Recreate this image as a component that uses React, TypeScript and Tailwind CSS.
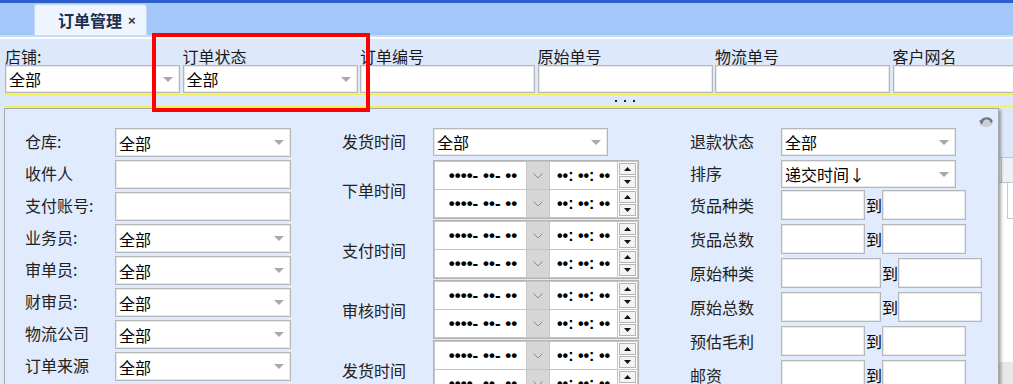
import React from "react";

function Caret() {
  return (
    <svg width="10" height="5" viewBox="0 0 10 5" className="shrink-0">
      <path d="M0 0H10L5 5Z" fill="#a9a9a9" />
    </svg>
  );
}

function Select({ value, className }: { value?: string; className: string }) {
  return (
    <div
      className={`flex items-center justify-between bg-white border border-[#b7b7b7] shadow-[inset_0_0_0_1px_#e9e9e9] pl-[3px] pr-[6px] ${className}`}
    >
      <span className="text-[16px] leading-none text-black">{value}</span>
      <Caret />
    </div>
  );
}

function Box({ className }: { className: string }) {
  return (
    <div
      className={`bg-white border border-[#b7b7b7] shadow-[inset_0_0_0_1px_#e9e9e9] ${className}`}
    />
  );
}

function DateRow() {
  return (
    <div className="flex h-[27px] gap-[1px]">
      <div className="w-[91px] bg-white flex items-center justify-center pl-[5px] text-[17px] font-bold font-['Liberation_Sans',sans-serif] leading-none text-black whitespace-nowrap">
        ••••- ••- ••
      </div>
      <div className="w-[22px] bg-[#d6d6d6] flex items-center justify-center">
        <svg width="10" height="6" viewBox="0 0 10 6">
          <path d="M0.5 0.5L5 5L9.5 0.5" fill="none" stroke="#8a8a8a" strokeWidth="1" />
        </svg>
      </div>
      <div className="w-[67px] bg-white flex items-center justify-center text-[16px] font-bold font-['Liberation_Sans',sans-serif] leading-none text-black whitespace-nowrap">
        ••: ••: ••
      </div>
      <div className="w-[19px] bg-white flex flex-col gap-[1px] p-[1px]">
        <div className="flex-1 bg-[#f3f3f3] border border-[#b4b4b4] flex items-center justify-center">
          <svg width="7" height="4" viewBox="0 0 7 4">
            <path d="M0 4H7L3.5 0Z" fill="#111" />
          </svg>
        </div>
        <div className="flex-1 bg-[#f3f3f3] border border-[#b4b4b4] flex items-center justify-center">
          <svg width="7" height="4" viewBox="0 0 7 4">
            <path d="M0 0H7L3.5 4Z" fill="#111" />
          </svg>
        </div>
      </div>
    </div>
  );
}

function DateGroup({ label }: { label: string }) {
  return (
    <div className="flex items-center">
      <div className="w-[91px] text-[16px] text-[#222] leading-none">{label}</div>
      <div className="w-[206px] border border-[#b3b3b3] bg-[#c6c6c6] p-[1px] flex flex-col gap-[1px]">
        <DateRow />
        <DateRow />
      </div>
    </div>
  );
}

function Col1Row({ label, value, select }: { label: string; value?: string; select?: boolean }) {
  return (
    <div className="flex items-center h-[29px]">
      <div className="w-[90px] text-[16px] text-[#222] leading-none -mt-[3px]">{label}</div>
      {select ? <Select value={value} className="w-[176px] h-[29px]" /> : <Box className="w-[176px] h-[29px]" />}
    </div>
  );
}

function RangeRow({ label, wide }: { label: string; wide?: boolean }) {
  return (
    <div className="flex items-center h-[30px]">
      <div className="w-[91px] text-[16px] text-[#222] leading-none">{label}</div>
      {wide ? <Box className="w-[100px] h-[30px]" /> : <Box className="w-[84px] h-[30px]" />}
      <div className="w-[17px] pl-[1px] text-[16px] text-black leading-none">到</div>
      <Box className="w-[84px] h-[30px]" />
    </div>
  );
}

function TopField({ label, value, select }: { label: string; value?: string; select?: boolean }) {
  return (
    <div className="w-[175px] shrink-0 flex flex-col">
      <div className="h-[18px] leading-[18px] text-[16px] text-[#1a1a1a] whitespace-nowrap">{label}</div>
      {select ? <Select value={value} className="h-[28px] w-[175px]" /> : <Box className="h-[28px] w-[175px]" />}
    </div>
  );
}

export default function App() {
  return (
    <div className="w-[1013px] h-[384px] overflow-hidden relative bg-[#dde9fb] font-['Noto_Sans_CJK_SC','Noto_Sans',sans-serif]">
      {/* top bar */}
      <div className="h-[3px] bg-[#2c5fca]" />
      <div className="h-[32px] bg-[#a4c7fa] flex items-end pl-[34px]">
        <div className="h-[31px] w-[113px] bg-[#eef5fe] border border-b-0 border-[#c3d9f7] rounded-t-[3px] flex items-center pl-[23px] gap-[6px]">
          <span className="text-[16px] font-bold text-[#1c2d4f] leading-none">订单管理</span>
          <span className="text-[13px] font-bold text-[#333] leading-none font-['Liberation_Sans',sans-serif]">×</span>
        </div>
      </div>
      <div className="h-[2px] bg-[#c6dcf9]" />
      <div className="h-[2px] bg-white" />

      {/* query fields */}
      <div className="pt-[8px] pl-[5px] flex gap-[2.5px]">
        <TopField label="店铺:" value="全部" select />
        <TopField label="订单状态" value="全部" select />
        <TopField label="订单编号" />
        <TopField label="原始单号" />
        <TopField label="物流单号" />
        <TopField label="客户网名" />
      </div>

      {/* collapse bar */}
      <div className="ml-[5px] mt-[1px] h-[13px] border-y border-[#eeee55] flex items-center pl-[610px] gap-[7px]">
        <div className="w-[2px] h-[2px] bg-[#222]" />
        <div className="w-[2px] h-[2px] bg-[#222]" />
        <div className="w-[2px] h-[2px] bg-[#222]" />
      </div>

      {/* underlying grid (mostly hidden) */}
      <div className="h-[50px]" />
      <div className="ml-[5px] h-[26px] border-y border-[#c3c3c3] bg-[#eef1f6] flex justify-end">
        <div className="w-[12px] border-l border-[#c3c3c3]" />
      </div>
      <div className="ml-[5px] h-[179px] bg-white flex justify-end">
        <div className="w-[6px] border-l border-[#c8c8c8] h-[36px] border-b" />
      </div>
      <div className="ml-[5px] h-[30px] bg-[#e8e8e8]" />

      {/* popup panel */}
      <div className="absolute left-[4px] top-[108px] w-[995px] h-[300px] border border-[#a9a9a9] bg-[#e0ebfd] shadow-[2px_2px_3px_rgba(0,0,0,0.35)] pt-[19px] pl-[20px] flex">
        {/* refresh icon */}
        <div className="absolute right-[4px] top-[4px] w-[16px] h-[15px] flex items-center justify-center">
          <svg width="16" height="14" viewBox="0 0 16 14">
            <ellipse cx="8" cy="9.5" rx="6.5" ry="3.5" fill="#c9cdd3" />
            <path d="M3.5 8 C4.5 3.5, 12 3, 13.5 7.5" fill="none" stroke="#6f757d" strokeWidth="2.4" strokeLinecap="round" />
            <path d="M1 6.5 L6 6 L3.8 10.5 Z" fill="#6f757d" />
          </svg>
        </div>

        {/* column 1 */}
        <div className="flex flex-col gap-[3px] w-[266px]">
          <Col1Row label="仓库:" value="全部" select />
          <Col1Row label="收件人" />
          <Col1Row label="支付账号:" />
          <Col1Row label="业务员:" value="全部" select />
          <Col1Row label="审单员:" value="全部" select />
          <Col1Row label="财审员:" value="全部" select />
          <Col1Row label="物流公司" value="全部" select />
          <Col1Row label="订单来源" value="全部" select />
          <Col1Row label="" select />
        </div>

        {/* column 2 */}
        <div className="ml-[51px] flex flex-col w-[297px]">
          <div className="flex items-center h-[28px]">
            <div className="w-[91px] text-[16px] text-[#222] leading-none -mt-[3px]">发货时间</div>
            <Select value="全部" className="w-[175px] h-[28px]" />
          </div>
          <div className="mt-[4px] flex flex-col gap-[1px]">
            <DateGroup label="下单时间" />
            <DateGroup label="支付时间" />
            <DateGroup label="审核时间" />
            <DateGroup label="发货时间" />
          </div>
        </div>

        {/* column 3 */}
        <div className="ml-[51px] flex flex-col">
          <div className="flex items-center h-[28px]">
            <div className="w-[91px] text-[16px] text-[#222] leading-none -mt-[3px]">退款状态</div>
            <Select value="全部" className="w-[175px] h-[28px]" />
          </div>
          <div className="flex items-center h-[28px] mt-[4px]">
            <div className="w-[91px] text-[16px] text-[#222] leading-none -mt-[3px]">排序</div>
            <Select value="递交时间↓" className="w-[175px] h-[28px]" />
          </div>
          <div className="mt-[2px] flex flex-col gap-[4px]">
            <RangeRow label="货品种类" />
            <RangeRow label="货品总数" />
            <RangeRow label="原始种类" wide />
            <RangeRow label="原始总数" wide />
            <RangeRow label="预估毛利" />
            <RangeRow label="邮资" />
          </div>
        </div>
      </div>

      {/* red highlight annotation */}
      <div className="absolute left-[152px] top-[33px] w-[218px] h-[79px] border-[4px] border-[#ff0000] pointer-events-none" />
    </div>
  );
}
